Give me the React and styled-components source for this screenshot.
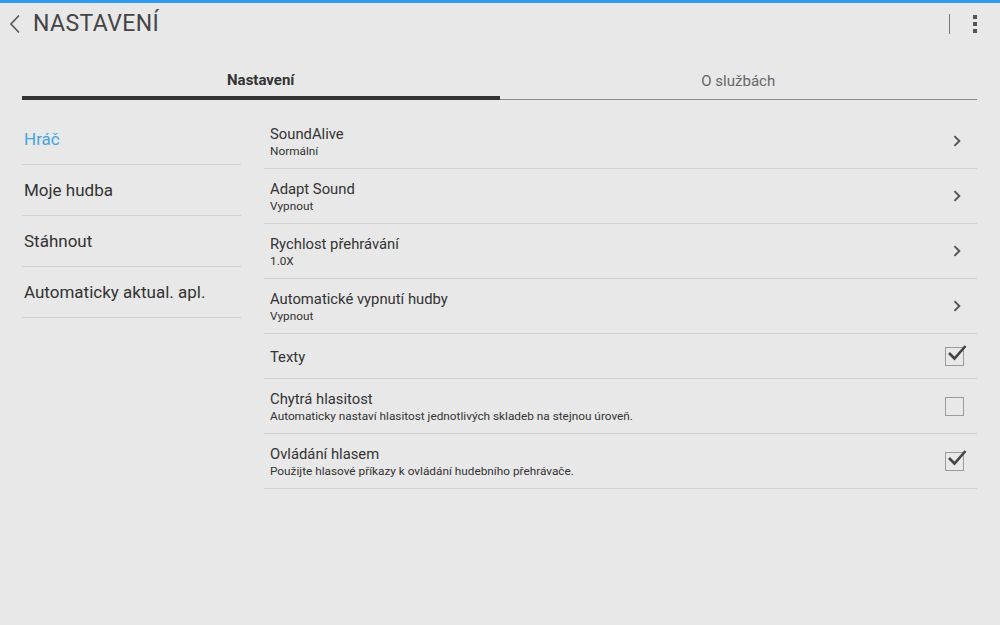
import React from "react";
import styled, { createGlobalStyle } from "styled-components";

const GlobalStyle = createGlobalStyle`
  html, body {
    margin: 0;
    padding: 0;
    background: #e8e8e8;
    font-family: Roboto, "Noto Sans", "Liberation Sans", sans-serif;
  }
`;

const Page = styled.div`
  width: 1000px;
  height: 625px;
  box-sizing: border-box;
  border-top: 3px solid #2e9bef;
  background: #e8e8e8;
  display: flex;
  flex-direction: column;
`;

const TopBar = styled.div`
  height: 41px;
  display: flex;
  align-items: center;
  padding: 0 23px 0 8px;
`;

const Title = styled.h1`
  margin: 0 0 0 11px;
  font-size: 23px;
  font-weight: 400;
  color: #444;
  letter-spacing: 0.4px;
  flex: 1;
`;

const BarDivider = styled.div`
  width: 1px;
  height: 20px;
  background: #777;
  margin-right: 23px;
`;

const Tabs = styled.div`
  margin: 14px 23px 0 22px;
  display: flex;
  align-items: flex-end;
`;

const Tab = styled.div`
  flex: 1;
  box-sizing: border-box;
  height: 42px;
  display: flex;
  align-items: center;
  justify-content: center;
  padding-top: ${(p) => (p.active ? "5px" : "4px")};
  font-size: 15px;
  font-weight: ${(p) => (p.active ? 700 : 400)};
  color: ${(p) => (p.active ? "#333" : "#666")};
  border-bottom: ${(p) => (p.active ? "4px solid #333" : "1px solid #8a8a8a")};
  position: relative;
  & + &::before {
    content: "";
    position: absolute;
    left: 0;
    top: 11px;
    width: 1px;
    height: 19px;
    background: #d0d0d0;
  }
`;

const Content = styled.div`
  display: flex;
  padding: 14px 23px 0 22px;
  gap: 23px;
`;

const SideList = styled.ul`
  list-style: none;
  margin: 0;
  padding: 0;
  width: 219px;
  flex-shrink: 0;
`;

const SideItem = styled.li`
  height: 50px;
  display: flex;
  align-items: center;
  padding-left: 2px;
  border-bottom: 1px solid #cfcfcf;
  font-size: 17px;
  color: ${(p) => (p.active ? "#44a5df" : "#333")};
`;

const SettingsList = styled.div`
  flex: 1;
  display: flex;
  flex-direction: column;
`;

const Row = styled.div`
  height: ${(p) => (p.short ? "44px" : "54px")};
  display: flex;
  align-items: center;
  padding: 0 ${(p) => (p.check ? "13px" : "16px")} 0 6px;
  border-bottom: 1px solid #cfcfcf;
`;

const RowText = styled.div`
  flex: 1;
  display: flex;
  flex-direction: column;
  padding-top: 1px;
`;

const RowTitle = styled.span`
  font-size: 14.8px;
  color: #333;
  line-height: 18px;
`;

const RowSub = styled.span`
  font-size: 11.8px;
  color: #333;
  line-height: 14px;
  margin-top: 1px;
`;

const Box = styled.div`
  width: 17px;
  height: 17px;
  border: 1.5px solid #9b9b9b;
  position: relative;
`;

const Chevron = ({ size = 12, color = "#555", width = 2 }) => (
  <svg width={size * 0.65} height={size} viewBox="0 0 8 12">
    <path d="M1.5 1 L6.5 6 L1.5 11" fill="none" stroke={color} strokeWidth={width} />
  </svg>
);

const Check = styled.svg`
  position: absolute;
  left: 1px;
  top: -5px;
`;

const CheckBox = ({ checked }) => (
  <Box>
    {checked && (
      <Check width="20" height="20" viewBox="0 0 20 20">
        <path d="M2 10 L7.5 15.5 L18.5 3" fill="none" stroke="#444" strokeWidth="2.6" />
      </Check>
    )}
  </Box>
);

const BackIcon = () => (
  <svg width="14" height="20" viewBox="0 0 14 20">
    <path d="M11 1.5 L3 10 L11 18.5" fill="none" stroke="#555" strokeWidth="1.6" />
  </svg>
);

const Dots = styled.div`
  display: flex;
  flex-direction: column;
  gap: 3px;
  span {
    width: 4px;
    height: 4px;
    background: #555;
  }
`;

const sideItems = ["Hráč", "Moje hudba", "Stáhnout", "Automaticky aktual. apl."];

const settings = [
  { title: "SoundAlive", sub: "Normální", type: "nav" },
  { title: "Adapt Sound", sub: "Vypnout", type: "nav" },
  { title: "Rychlost přehrávání", sub: "1.0X", type: "nav" },
  { title: "Automatické vypnutí hudby", sub: "Vypnout", type: "nav" },
  { title: "Texty", type: "check", checked: true },
  {
    title: "Chytrá hlasitost",
    sub: "Automaticky nastaví hlasitost jednotlivých skladeb na stejnou úroveň.",
    type: "check",
    checked: false,
  },
  {
    title: "Ovládání hlasem",
    sub: "Použijte hlasové příkazy k ovládání hudebního přehrávače.",
    type: "check",
    checked: true,
  },
];

const App = () => {
  return (
    <Page>
      <GlobalStyle />
      <TopBar>
        <BackIcon />
        <Title>NASTAVENÍ</Title>
        <BarDivider />
        <Dots>
          <span />
          <span />
          <span />
        </Dots>
      </TopBar>
      <Tabs>
        <Tab active>Nastavení</Tab>
        <Tab>O službách</Tab>
      </Tabs>
      <Content>
        <SideList>
          {sideItems.map((s, i) => (
            <SideItem key={s} active={i === 0}>
              {s}
            </SideItem>
          ))}
        </SideList>
        <SettingsList>
          {settings.map((s) => (
            <Row key={s.title} short={!s.sub} check={s.type === "check"}>
              <RowText>
                <RowTitle>{s.title}</RowTitle>
                {s.sub && <RowSub>{s.sub}</RowSub>}
              </RowText>
              {s.type === "nav" ? <Chevron /> : <CheckBox checked={s.checked} />}
            </Row>
          ))}
        </SettingsList>
      </Content>
    </Page>
  );
};

export default App;
